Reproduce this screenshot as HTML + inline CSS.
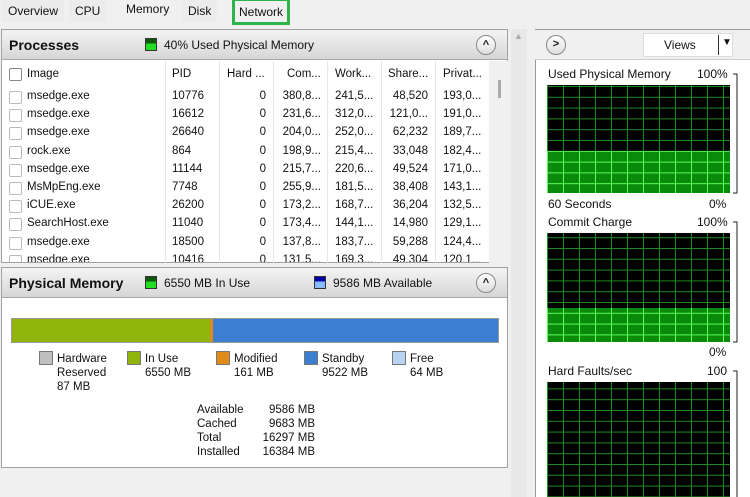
<!DOCTYPE html>
<html><head><meta charset="utf-8"><style>
*{margin:0;padding:0;box-sizing:border-box}
body{width:750px;height:497px;background:#f0f0f0;font-family:"Liberation Sans",sans-serif;font-size:11.5px;color:#111;position:relative;overflow:hidden}
.a{position:absolute;white-space:nowrap}
.tab{position:absolute;top:0;height:22px;line-height:22px;font-size:12px;padding:0 6px}
.panel{position:absolute;background:#fff;border:1px solid #a0a0a0}
.hdr{position:absolute;left:0;right:0;top:0;height:30px;background:linear-gradient(#f4f4f4,#d6d6d6);border-bottom:1px solid #a8a8a8}
.hdr b{position:absolute;left:7px;top:7px;font-size:14px}
.up{position:absolute;width:20px;height:20px;border:1px solid #888;border-radius:50%;background:linear-gradient(#fff,#ddd);text-align:center;line-height:18px;font-size:11px;font-weight:bold}
.cb{position:absolute;left:7px;width:13px;height:13px;border:1px solid #888;border-radius:2px;background:#fff}
.r{text-align:right}
.sw{position:absolute;width:14px;height:14px;border:1px solid #777}
</style></head><body>
<div class="tab" style="left:2px;background:#ececec">Overview</div>
<div class="tab" style="left:69px;background:#ececec">CPU</div>
<div class="tab" style="left:120px;top:-2px;background:#f0f0f0">Memory</div>
<div class="tab" style="left:182px;background:#ececec">Disk</div>
<div class="tab" style="left:232px;background:#f0f0f0;border:3px solid #2db34a;height:27px;top:-2px;line-height:23px;padding:0 4px">Network</div>

<div class="panel" style="left:1px;top:29px;width:507px;height:234px">
<div class="hdr"><b>Processes</b>
<div class="a" style="left:143px;top:8px;width:12px;height:13px;background:linear-gradient(#0a5a0a 40%,#22dd22 40%);border:1px solid #333"></div>
<div class="a" style="left:162px;top:8px;font-size:12px">40% Used Physical Memory</div>
<div class="up" style="left:474px;top:5px">^</div></div>
<div class="cb" style="top:38px"></div><div class="a" style="left:25px;top:38px">Image</div>
<div class="a" style="left:170px;top:38px">PID</div>
<div class="a" style="left:225px;top:38px">Hard ...</div>
<div class="a" style="left:285px;top:38px">Com...</div>
<div class="a" style="left:333px;top:38px">Work...</div>
<div class="a" style="left:386px;top:38px">Share...</div>
<div class="a" style="left:441px;top:38px">Privat...</div>
<div class="a" style="left:163px;top:31px;width:1px;height:205px;background:#e6e6e6"></div>
<div class="a" style="left:217px;top:31px;width:1px;height:205px;background:#e6e6e6"></div>
<div class="a" style="left:271px;top:31px;width:1px;height:205px;background:#e6e6e6"></div>
<div class="a" style="left:325px;top:31px;width:1px;height:205px;background:#e6e6e6"></div>
<div class="a" style="left:379px;top:31px;width:1px;height:205px;background:#e6e6e6"></div>
<div class="a" style="left:433px;top:31px;width:1px;height:205px;background:#e6e6e6"></div>
<div class="a" style="left:487px;top:31px;width:19px;height:202px;background:#f0f0f0"></div>
<div class="a" style="left:496px;top:50px;width:3px;height:18px;background:#aaa"></div>
<div id="rows"></div>
</div>

<div class="panel" style="left:1px;top:267px;width:507px;height:201px">
<div class="hdr"><b>Physical Memory</b>
<div class="a" style="left:143px;top:8px;width:12px;height:13px;background:linear-gradient(#0a5a0a 40%,#22dd22 40%);border:1px solid #333"></div>
<div class="a" style="left:162px;top:8px;font-size:12px">6550 MB In Use</div>
<div class="a" style="left:312px;top:8px;width:12px;height:13px;background:linear-gradient(#0000aa 40%,#88bbff 40%);border:1px solid #333"></div>
<div class="a" style="left:331px;top:8px;font-size:12px">9586 MB Available</div>
<div class="up" style="left:474px;top:5px">^</div></div>
<div class="a" style="left:9px;top:50px;width:488px;height:25px;border:1px solid #999;background:linear-gradient(90deg,#8fb50c 0,#8fb50c 198px,#e08a1a 198px,#e08a1a 201px,#3c7fd0 201px)"></div>
<div class="sw" style="left:37px;top:83px;background:#c0c0c0"></div><div class="a" style="left:55px;top:84px;line-height:14px">Hardware<br>Reserved<br>87 MB</div>
<div class="sw" style="left:125px;top:83px;background:#8fb50c"></div><div class="a" style="left:143px;top:84px;line-height:14px">In Use<br>6550 MB</div>
<div class="sw" style="left:214px;top:83px;background:#e08a1a"></div><div class="a" style="left:232px;top:84px;line-height:14px">Modified<br>161 MB</div>
<div class="sw" style="left:302px;top:83px;background:#3c7fd0"></div><div class="a" style="left:320px;top:84px;line-height:14px">Standby<br>9522 MB</div>
<div class="sw" style="left:390px;top:83px;background:#b8d2f0"></div><div class="a" style="left:408px;top:84px;line-height:14px">Free<br>64 MB</div>
<div class="a" style="left:195px;top:135px;line-height:14px">Available<br>Cached<br>Total<br>Installed</div>
<div class="a r" style="left:250px;width:63px;top:135px;line-height:14px">9586 MB<br>9683 MB<br>16297 MB<br>16384 MB</div>
</div>

<div class="a" style="left:511px;top:29px;width:16px;height:468px;background:#e8e8e8"></div>
<div class="a" style="left:514px;top:31px;color:#aaa;font-size:9px">▲</div>

<div class="a" style="left:535px;top:29px;width:215px;height:468px;background:#fff;border-left:1px solid #999;border-top:1px solid #999"></div>
<div class="a" style="left:535px;top:30px;width:215px;height:30px;background:#f0f0f0;border-bottom:1px solid #ccc"></div>
<div class="up" style="left:546px;top:35px;line-height:17px">&gt;</div>
<div class="a" style="left:643px;top:33px;width:90px;height:24px;background:#fff;border:1px solid #ddd"></div>
<div class="a" style="left:664px;top:38px;font-size:12px">Views</div>
<div class="a" style="left:718px;top:35px;width:1px;height:20px;background:#333"></div>
<div class="a" style="left:722px;top:37px;font-size:10px">▼</div>

<div class="a" style="left:548px;top:67px;font-size:12px">Used Physical Memory</div><div class="a" style="left:697px;top:67px;font-size:12px">100%</div>
<div class="a" style="left:548px;top:197px;font-size:12px">60 Seconds</div><div class="a" style="left:709px;top:197px;font-size:12px">0%</div>
<div class="a" style="left:548px;top:215px;font-size:12px">Commit Charge</div><div class="a" style="left:697px;top:215px;font-size:12px">100%</div>
<div class="a" style="left:709px;top:345px;font-size:12px">0%</div>
<div class="a" style="left:548px;top:364px;font-size:12px">Hard Faults/sec</div><div class="a" style="left:707px;top:364px;font-size:12px">100</div>
<svg class="a" style="left:0;top:0" width="750" height="497">
<defs><pattern id="g" x="547" y="86" width="16" height="10.8" patternUnits="userSpaceOnUse"><path d="M0.5 0V11M0 0.5H16" stroke="#1f8a1f" stroke-width="1" fill="none"/></pattern>
<pattern id="g2" x="547" y="86" width="16" height="10.8" patternUnits="userSpaceOnUse"><path d="M0.5 0V11M0 0.5H16" stroke="#5cff5c" stroke-width="1" fill="none"/></pattern></defs>
<rect x="547" y="85" width="183" height="108" fill="#000"/><rect x="547" y="85" width="183" height="108" fill="url(#g)"/>
<rect x="547" y="151" width="183" height="42" fill="#0a8a0a"/><rect x="547" y="151" width="183" height="42" fill="url(#g2)"/>
<rect x="547" y="233" width="183" height="109" fill="#000"/><rect x="547" y="233" width="183" height="109" fill="url(#g)"/>
<rect x="547" y="308" width="183" height="34" fill="#0a8a0a"/><rect x="547" y="308" width="183" height="34" fill="url(#g2)"/>
<rect x="547" y="382" width="183" height="115" fill="#000"/><rect x="547" y="382" width="183" height="115" fill="url(#g)"/>
<path d="M733 74h4v119h-4M733 222h4v120h-4M733 371h4v126" stroke="#222" fill="none"/>
</svg>
<script>
var d=[["msedge.exe","10776","380,8...","241,5...","48,520","193,0..."],["msedge.exe","16612","231,6...","312,0...","121,0...","191,0..."],["msedge.exe","26640","204,0...","252,0...","62,232","189,7..."],["rock.exe","864","198,9...","215,4...","33,048","182,4..."],["msedge.exe","11144","215,7...","220,6...","49,524","171,0..."],["MsMpEng.exe","7748","255,9...","181,5...","38,408","143,1..."],["iCUE.exe","26200","173,2...","168,7...","36,204","132,5..."],["SearchHost.exe","11040","173,4...","144,1...","14,980","129,1..."],["msedge.exe","18500","137,8...","183,7...","59,288","124,4..."],["msedge.exe","10416","131,5...","169,3...","49,304","120,1..."]];
var h="";d.forEach(function(r,i){var t=60+i*18.2;
h+='<div class="cb" style="top:'+(t+1)+'px;border-color:#bbb"></div><div class="a" style="left:25px;top:'+t+'px">'+r[0]+'</div><div class="a" style="left:170px;top:'+t+'px">'+r[1]+'</div><div class="a r" style="left:230px;width:34px;top:'+t+'px">0</div><div class="a r" style="left:272px;width:47px;top:'+t+'px">'+r[2]+'</div><div class="a" style="left:333px;top:'+t+'px">'+r[3]+'</div><div class="a r" style="left:380px;width:46px;top:'+t+'px">'+r[4]+'</div><div class="a" style="left:441px;top:'+t+'px">'+r[5]+'</div>';});
document.getElementById("rows").innerHTML='<div class="a" style="left:0;top:0;width:487px;height:232px;overflow:hidden">'+h+'</div>';
</script>
</body></html>
